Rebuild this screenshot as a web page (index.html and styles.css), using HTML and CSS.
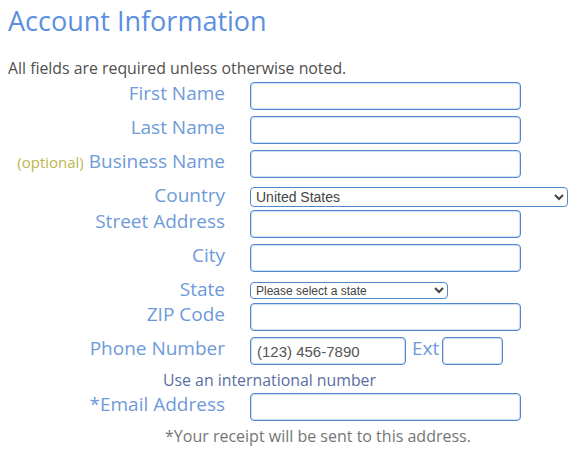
FILE: index.html
```html
<!DOCTYPE html>
<html>
<head>
<meta charset="utf-8">
<link rel="stylesheet" href="styles.css">
</head>
<body>
<div class="page">
  <h1 class="title">Account Information</h1>
  <p class="sub">All fields are required unless otherwise noted.</p>
  <form class="form">
    <div class="row">
      <label class="lbl">First Name</label>
      <input class="field" type="text">
    </div>
    <div class="row">
      <label class="lbl">Last Name</label>
      <input class="field" type="text">
    </div>
    <div class="row">
      <label class="lbl"><span class="opt">(optional)</span> Business Name</label>
      <input class="field" type="text">
    </div>
    <div class="row row-sel row-country">
      <label class="lbl">Country</label>
      <select class="sel sel-country"><option>United States</option></select>
    </div>
    <div class="row">
      <label class="lbl">Street Address</label>
      <input class="field" type="text">
    </div>
    <div class="row">
      <label class="lbl">City</label>
      <input class="field" type="text">
    </div>
    <div class="row row-sel row-state">
      <label class="lbl">State</label>
      <select class="sel sel-state"><option>Please select a state</option></select>
    </div>
    <div class="row">
      <label class="lbl">ZIP Code</label>
      <input class="field" type="text">
    </div>
    <div class="row">
      <label class="lbl">Phone Number</label>
      <input class="field field-phone" type="text" value="(123) 456-7890">
      <span class="ext">Ext</span>
      <input class="field field-ext" type="text">
    </div>
    <p class="note">Use an international number</p>
    <div class="row">
      <label class="lbl">*Email Address</label>
      <input class="field" type="text">
    </div>
    <p class="receipt">*Your receipt will be sent to this address.</p>
  </form>
</div>
</body>
</html>
```
FILE: styles.css
```css
html, body {
  margin: 0;
  padding: 0;
  background: #ffffff;
}
.page {
  padding: 3px 8px 0 8px;
  font-family: "Open Sans", "Liberation Sans", sans-serif;
  font-weight: 400;
}
.title {
  margin: 0;
  font-size: 27px;
  line-height: 36px;
  font-weight: 400;
  color: #5b8fe0;
}
.sub {
  margin: 19px 0 0 0;
  font-size: 15.85px;
  line-height: 20px;
  color: #505050;
}
.form {
  margin-top: 2px;
}
.row {
  display: flex;
  align-items: flex-start;
  margin-bottom: 4px;
}
.lbl {
  flex: 0 0 217px;
  margin-right: 25px;
  text-align: right;
  font-size: 19px;
  line-height: 26px;
  color: #6e9ad9;
  white-space: nowrap;
}
.opt {
  font-size: 15px;
  color: #bdb652;
}
.field {
  box-sizing: border-box;
  margin: 2px 0 0 0;
  width: 271px;
  height: 28px;
  border: 1px solid #5088cc;
  border-radius: 4px;
  box-shadow: inset 0 0 1px 1px rgba(80, 136, 204, 0.3);
  padding: 0 6px;
  font-family: "Liberation Sans", Arial, sans-serif;
  font-weight: 400;
  font-size: 15px;
  color: #555555;
  background: #ffffff;
  outline: none;
}
.field-phone {
  width: 156px;
}
.ext {
  margin: 0 3px 0 6px;
  font-size: 19px;
  line-height: 26px;
  color: #6e9ad9;
}
.field-ext {
  width: 61px;
}
.row-sel {
  margin-bottom: 0;
}
.row-country {
  height: 26px;
}
.row-state {
  height: 25px;
}
.sel {
  box-sizing: border-box;
  border: 1px solid #5088cc;
  border-radius: 4px;
  background: #ffffff;
  font-family: "Liberation Sans", Arial, sans-serif;
  font-weight: 400;
  color: #444444;
  padding: 0 1px;
}
.sel-country {
  margin-top: 5px;
  width: 318px;
  height: 20px;
  font-size: 14px;
}
.sel-state {
  margin-top: 6px;
  width: 198px;
  height: 17px;
  font-size: 12px;
}
.note {
  margin: 0 0 0 155px;
  font-size: 15.85px;
  line-height: 22px;
  color: #5a6ea3;
}
.receipt {
  margin: 4px 0 0 157px;
  font-size: 16px;
  line-height: 22px;
  color: #757575;
}
```
